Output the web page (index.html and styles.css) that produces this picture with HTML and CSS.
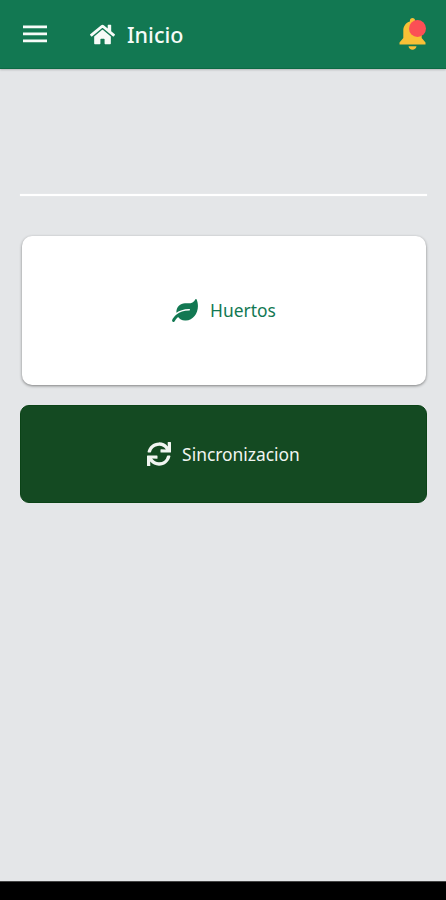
FILE: index.html
```
<!DOCTYPE html>
<html lang="es">
<head>
    <meta charset="UTF-8">
    <meta name="viewport" content="width=device-width, initial-scale=1.0">
    <title>Inicio</title>
    <link rel="stylesheet" href="styles.css">
</head>
<body>
    <header class="header">
        <svg class="menu-icon" viewBox="0 0 24 18">
            <path d="M0 .5h24v2.700H0zM0 7.500h24v2.700H0zM0 14.500h24v2.700H0z"/>
        </svg>
        <svg class="home-icon" viewBox="0 0 576 512">
            <path d="M280.37 148.26L96 300.11V464a16 16 0 0 0 16 16l112.06-.29a16 16 0 0 0 15.92-16V368a16 16 0 0 1 16-16h64a16 16 0 0 1 16 16v95.64a16 16 0 0 0 16 16.05L464 480a16 16 0 0 0 16-16V300L295.67 148.26a12.19 12.19 0 0 0-15.3 0zM571.6 251.47L488 182.56V44.05a12 12 0 0 0-12-12h-56a12 12 0 0 0-12 12v72.61L318.47 43a48 48 0 0 0-61 0L4.34 251.47a12 12 0 0 0-1.6 16.9l25.5 31A12 12 0 0 0 45.15 301l235.22-193.74a12.19 12.19 0 0 1 15.3 0L530.9 301a12 12 0 0 0 16.9-1.6l25.5-31a12 12 0 0 0-1.7-16.93z"/>
        </svg>
        <h1>Inicio</h1>
        <div class="notifications">
            <svg class="bell-icon" viewBox="0 0 27 32">
                <path d="M13.5 0c-1.500 0-2.600 1.100-2.600 2.600v.8C6.700 4.600 4.300 8.200 4.300 12.500V20L.5 24.500V26.500h26v-2L22.700 20v-7.500c0-4.300-2.400-7.900-6.600-9.100v-.8C16.100 1.100 15 0 13.500 0zM9.500 28.300h8c-.3 2-2 3.500-4 3.500s-3.700-1.500-4-3.500z"/>
            </svg>
            <span class="badge"></span>
        </div>
    </header>

    <main class="content">
        <hr class="divider">
        <button class="card">
            <svg class="leaf-icon" viewBox="0 0 576 512">
                <path d="M546.2 9.7c-5.6-12.5-21.6-13-28.3-1.2C486.9 62.4 431.4 96 368 96h-80C182 96 96 182 96 288c0 7 .8 13.700 1.500 20.500C161.300 262.800 253.400 224 384 224c8.800 0 16 7.200 16 16s-7.200 16-16 16C132.600 256 26 410.100 2.400 468c-6.600 16.300 1.200 34.900 17.500 41.600 16.400 6.800 35-1.100 41.800-17.300 1.500-3.600 20.900-47.900 71.900-90.600 32.400 43.900 94 85.800 174.900 77.200C465.500 467.500 576 326.700 576 154.300c0-50.200-10.800-102.200-29.800-144.600z"/>
            </svg>
            <span>Huertos</span>
        </button>
        <button class="card sync">
            <svg class="sync-icon" viewBox="0 0 512 512">
                <path d="M440.65 12.57l4 82.77A247.16 247.16 0 0 0 255.83 8C134.73 8 33.91 94.92 12.29 209.82A12 12 0 0 0 24.09 224h49.05a12 12 0 0 0 11.67-9.26 175.91 175.91 0 0 1 317-56.94l-101.46-4.86a12 12 0 0 0-12.57 12v47.41a12 12 0 0 0 12 12H500a12 12 0 0 0 12-12V12a12 12 0 0 0-12-12h-47.37a12 12 0 0 0-11.98 12.57zM255.83 432a175.61 175.61 0 0 1-146-77.8l101.8 4.87a12 12 0 0 0 12.57-12v-47.4a12 12 0 0 0-12-12H12a12 12 0 0 0-12 12V500a12 12 0 0 0 12 12h47.35a12 12 0 0 0 12-12.6l-4.15-82.57A247.17 247.17 0 0 0 255.83 504c121.11 0 221.93-86.92 243.55-201.82a12 12 0 0 0-11.8-14.18h-49.05a12 12 0 0 0-11.67 9.26A175.86 175.86 0 0 1 255.83 432z"/>
            </svg>
            <span>Sincronizacion</span>
        </button>
    </main>

    <footer class="nav-bar"></footer>
</body>
</html>
```
FILE: styles.css
```
* {
    margin: 0;
    padding: 0;
    box-sizing: border-box;
    font-family: 'Noto Sans', 'Open Sans', sans-serif;
}

body {
    height: 100vh;
    display: flex;
    flex-direction: column;
    background: #e4e6e8;
    overflow: hidden;
}

svg {
    fill: currentColor;
    flex-shrink: 0;
}

/* Header */
.header {
    height: 69px;
    display: flex;
    align-items: center;
    padding: 0 20px 0 23px;
    background: #127852;
    border-bottom: 1px solid #0b6a43;
    box-shadow: 0 1px 2px rgba(0, 0, 0, 0.2);
    color: #f6fbf8;
}

.menu-icon {
    width: 24px;
    height: 18px;
}

.home-icon {
    width: 25px;
    height: 23px;
    margin-left: 43px;
}

h1 {
    margin-left: 12px;
    padding-top: 2px;
    font-size: 21.5px;
    font-weight: 500;
    line-height: 30px;
}

.notifications {
    position: relative;
    height: 32px;
    margin-left: auto;
}

.bell-icon {
    display: block;
    width: 27px;
    height: 32px;
    color: #f9c036;
}

.badge {
    position: absolute;
    top: 2px;
    right: 0;
    width: 17px;
    height: 17px;
    border-radius: 50%;
    background: #fb4f55;
}

/* Content */
.content {
    flex: 1;
    display: flex;
    flex-direction: column;
    padding: 125px 19px 0 20px;
}

.divider {
    height: 2px;
    margin-bottom: 40px;
    border: none;
    background: #fff;
    box-shadow: 0 0 1px #fff;
}

.card {
    height: 149px;
    display: flex;
    justify-content: center;
    align-items: center;
    gap: 12px;
    margin: 0 1px 20px 2px;
    padding-bottom: 1px;
    border: none;
    border-radius: 10px;
    background: #fff;
    box-shadow: 0 1px 3px rgba(0, 0, 0, 0.45);
    color: #127852;
    font-size: 17.4px;
    line-height: 24px;
    cursor: pointer;
}

.card.sync {
    height: 98px;
    gap: 11px;
    margin: 0;
    padding-bottom: 0;
    border: 1px solid #0b4317;
    border-radius: 9px;
    background: #144a22;
    box-shadow: none;
    color: #f1f5f1;
}

.leaf-icon {
    width: 26px;
    height: 23px;
}

.sync-icon {
    width: 24px;
    height: 24px;
}

/* Bottom system bar */
.nav-bar {
    height: 19px;
    background: #000;
    border-top: 1px solid #444;
}
```
